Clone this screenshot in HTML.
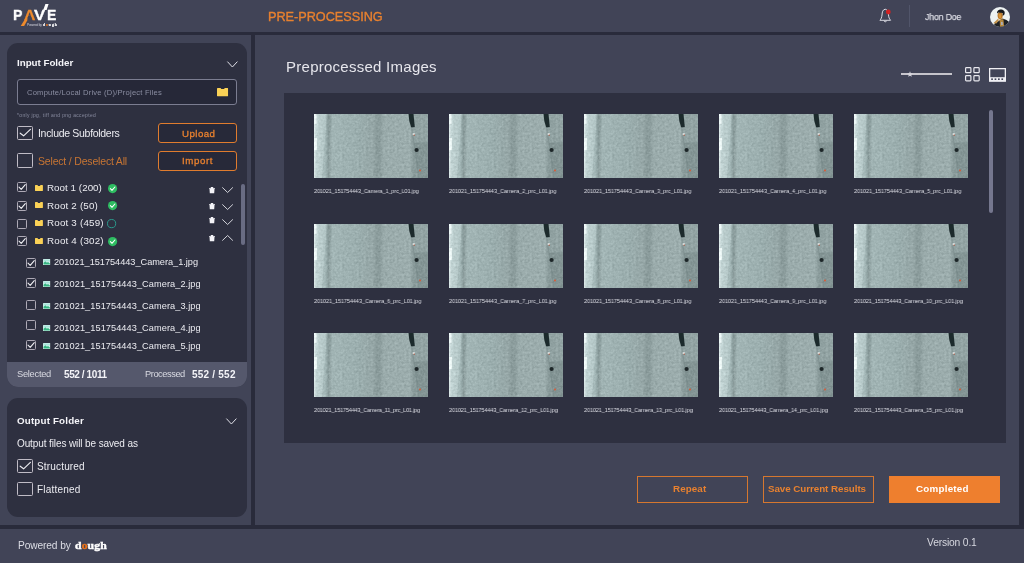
<!DOCTYPE html>
<html lang="en">
<head>
<meta charset="utf-8">
<title>PAVE - Pre-Processing</title>
<style>
*{box-sizing:border-box;margin:0;padding:0}
html,body{width:1024px;height:563px;overflow:hidden;background:#414457;font-family:"Liberation Sans",sans-serif;color:#ececf1}
#app{position:relative;width:1024px;height:563px;overflow:hidden;background:#414457}
.abs{position:absolute}
.dark{position:absolute;background:#292b3b}
.card{position:absolute;background:#2e3040;border-radius:11px;overflow:hidden}
.t{position:absolute;white-space:nowrap;line-height:1;will-change:transform}
.cbL{position:absolute;width:16px;height:14px;border:1px solid #c0bcc6;border-radius:1.5px}
.cbS{position:absolute;width:10px;height:10px;border:1px solid #aeaab6;border-radius:1.5px}
.btn{position:absolute;border:1px solid #e07c2e;border-radius:3px;background:#272939}
.btn2{position:absolute;border:1px solid #d5772f}
svg{position:absolute;overflow:visible}
.th{position:absolute;width:114px;height:64px}
.sb{position:absolute;background:#75778e;border-radius:2px}
</style>
</head>
<body>
<div id="app">
  <!-- hidden defs -->
  <svg width="0" height="0" style="left:0;top:0">
    <defs>
      <linearGradient id="tg" x1="0" x2="1" y1="0" y2="0">
        <stop offset="0" stop-color="#e1eded"/>
        <stop offset="0.02" stop-color="#c1d3d3"/>
        <stop offset="0.105" stop-color="#b1c4c4"/>
        <stop offset="0.125" stop-color="#8a9b9b"/>
        <stop offset="0.16" stop-color="#a2b5b5"/>
        <stop offset="0.38" stop-color="#9baeae"/>
        <stop offset="0.52" stop-color="#96a7a7"/>
        <stop offset="0.55" stop-color="#8a9b9b"/>
        <stop offset="0.585" stop-color="#8c9d9d"/>
        <stop offset="0.61" stop-color="#9aabab"/>
        <stop offset="0.84" stop-color="#9cadad"/>
        <stop offset="0.875" stop-color="#899a9a"/>
        <stop offset="1" stop-color="#8e9f9f"/>
      </linearGradient>
      <filter id="nz" x="0" y="0" width="100%" height="100%" color-interpolation-filters="sRGB">
        <feTurbulence type="fractalNoise" baseFrequency="0.42" numOctaves="2" seed="11" result="n"/>
        <feColorMatrix in="n" type="matrix" values="0.6 0.6 0 0 -0.1  0.6 0.6 0 0 -0.1  0.6 0.6 0 0 -0.1  0 0 0 0 1" result="g"/>
        <feComposite in="SourceGraphic" in2="g" operator="arithmetic" k1="0" k2="1" k3="0.18" k4="-0.09"/>
      </filter>
      <symbol id="thumb" viewBox="0 0 114 64">
        <g filter="url(#nz)">
        <rect width="114" height="64" fill="url(#tg)"/>
        <polygon points="13,0 18,0 13,64 8,64" fill="#7f9391" opacity="0.3"/>
        <polygon points="98,0 114,0 114,28.6 100,29.2" fill="#b6c9c7" opacity="0.15"/>
        <polygon points="100,29.2 114,28.6 114,64 104.8,64" fill="#6f8080" opacity="0.3"/>
        <rect x="0" y="0" width="2.6" height="10" fill="#eef8f7" opacity="0.8"/>
        <rect x="0" y="24" width="3" height="12" fill="#f2fbfa" opacity="0.85"/>
        </g>
        <polygon points="94.5,0 99.5,0 100.8,13 97.2,13.5 95.3,7" fill="#1c2a2c"/>
        <path d="M97.5 13 L100 29 L104.8 64" stroke="#788a8b" stroke-width="0.8" fill="none" opacity="0.7"/>
        <path d="M100 29.2 L114 28.6" stroke="#7c8e8e" stroke-width="0.7" fill="none" opacity="0.8"/>
        <rect x="98.6" y="19.3" width="2.2" height="1.6" fill="#eef3f2"/>
        <rect x="99.6" y="20.6" width="1.3" height="1" fill="#b5523a"/>
        <ellipse cx="102.6" cy="36" rx="2.1" ry="2" fill="#1d2628"/>
        <circle cx="106" cy="56.5" r="0.9" fill="#e2542c"/>
      </symbol>
      <symbol id="chk" viewBox="0 0 10 10">
        <path d="M2 5.2 L4.2 7.4 L8.3 2.6" stroke="#f0f0f4" stroke-width="1.1" fill="none" stroke-linecap="round" stroke-linejoin="round"/>
      </symbol>
      <symbol id="fold" viewBox="0 0 8 6">
        <path d="M0 0.5 Q0 0 0.5 0 L2.5 0 L3.1 0.8 L5 0.8 L5.6 0 L7.5 0 Q8 0 8 0.5 L8 5.5 Q8 6 7.5 6 L0.5 6 Q0 6 0 5.5 Z" fill="#fad156"/>
      </symbol>
      <symbol id="trash" viewBox="0 0 6 6.4">
        <path d="M0 1.2 L6 1.2 L6 2 L5.5 2 L5.2 6.4 L0.8 6.4 L0.5 2 L0 2 Z M1.9 0 L4.1 0 L4.4 1.2 L1.6 1.2 Z" fill="#f4f4f8"/>
      </symbol>
      <symbol id="pic" viewBox="0 0 7.4 6">
        <rect width="7.4" height="6" rx="0.6" fill="#d9f3ec"/>
        <path d="M0.5 5.5 L0.5 3.8 L2.4 2.2 L3.9 3.7 L5 2.9 L6.9 4.4 L6.9 5.5 Z" fill="#35b582"/>
        <rect x="0.5" y="0.5" width="6.4" height="2" fill="#7fd9d0" opacity="0.55"/>
      </symbol>
    </defs>
  </svg>

  <!-- frame lines -->
  <div class="dark" style="left:0;top:32px;width:1024px;height:3px"></div>
  <div class="dark" style="left:0;top:525px;width:1024px;height:4px"></div>
  <div class="dark" style="left:251px;top:32px;width:4px;height:496px"></div>
  <div class="dark" style="left:1019px;top:32px;width:5px;height:496px"></div>

  <!-- HEADER -->
  <svg style="left:0;top:0" width="70" height="32" viewBox="0 0 70 32">
    <polygon points="24.75,19.5 27.75,19.5 24.1,26 20.7,26" fill="#ee8a2c"/>
    <polygon points="43.2,10 46.6,10 48.6,4.1 45.4,4.1" fill="#ffffff"/>
  </svg>
  <svg style="left:879px;top:8px" width="14" height="16" viewBox="0 0 14 16">
    <path d="M6.2 1.2 C3.6 1.6 3.2 4.2 3 7 C2.8 9.6 2 11 0.9 12.3 L11.6 12.3 C10.5 11 9.7 9.6 9.5 7 C9.3 4.2 8.9 1.6 6.2 1.2 Z M5 12.6 C5.2 14.2 7.4 14.2 7.6 12.6" fill="none" stroke="#d9dae2" stroke-width="1"/>
    <circle cx="9.3" cy="4" r="2.4" fill="#d32222"/>
  </svg>
  <div class="abs" style="left:909px;top:5px;width:1px;height:22px;background:#51556a"></div>
  <svg style="left:990px;top:6.5px" width="20" height="20" viewBox="0 0 20 20">
    <defs><clipPath id="avc"><circle cx="10" cy="10" r="10"/></clipPath></defs>
    <g clip-path="url(#avc)">
      <rect width="20" height="20" fill="#edf2f2"/>
      <path d="M3.5 20 L4.6 16.6 L8 14.6 L12.6 11.6 L16.5 13 L19.8 15.4 L20 20 Z" fill="#1e2125"/>
      <path d="M9.6 12.6 L13.4 12.2 L14.2 19.8 L10 19.8 Z" fill="#b5883d"/>
      <ellipse cx="10.2" cy="8.6" rx="2.6" ry="3.7" fill="#b97a2c"/>
      <path d="M8.6 7.4 L10.6 6.8 L11.2 10.8 L9.4 11.4 Z" fill="#d9953a"/>
      <path d="M7.1 6.6 C6.8 3.2 9.4 2.3 11.6 2.6 C14.4 3 15.2 5.4 14.4 7.6 L12.8 9 L12.6 6 L8.4 5.6 Z" fill="#14171a"/>
      <path d="M3.2 16.2 L6.4 13.2 L8.2 11.4 L8.8 13.4 L6.4 16.6 Z" fill="#c2924b"/>
      <path d="M11 15 L12.6 15 L12.8 18 L11.2 18 Z" fill="#aeb3c4"/>
    </g>
  </svg>

  <!-- INPUT CARD -->
  <div class="card" style="left:7px;top:43px;width:240px;height:344px">
    <div class="abs" style="left:0;top:319px;width:240px;height:25px;background:#55586c"></div>
  </div>
  <svg style="left:226.5px;top:60.5px" width="11" height="7" viewBox="0 0 11 7"><path d="M0.4 0.6 L5.4 6 L10.4 0.6" stroke="#e0e0e8" stroke-width="1" fill="none"/></svg>
  <div class="abs" style="left:17px;top:79px;width:220px;height:26px;border:1px solid #7b7d91;border-radius:3px;background:#262838"></div>
  <svg style="left:217px;top:87.6px" width="11.2" height="8.4"><use href="#fold" width="11.2" height="8.4"/></svg>
  <div class="cbL" style="left:17px;top:126px"></div>
  <svg style="left:18px;top:126px" width="14" height="14" viewBox="0 0 14 14"><path d="M2.2 7.2 L5.6 9.8 L12.4 3.4" stroke="#ececf1" stroke-width="1.15" fill="none" stroke-linecap="round" stroke-linejoin="round"/></svg>
  <div class="cbL" style="left:17px;top:153px;height:15px"></div>
  <div class="btn" style="left:158px;top:123px;width:79px;height:20px"></div>
  <div class="btn" style="left:158px;top:150.5px;width:79px;height:20px"></div>
  <div class="cbS" style="left:17px;top:181.9px"></div>
  <svg style="left:17px;top:181.9px" width="10" height="10"><use href="#chk" width="10" height="10"/></svg>
  <svg style="left:35px;top:184.5px" width="7.9" height="6.1"><use href="#fold" width="7.9" height="6.1"/></svg>
  <svg style="left:107.7px;top:184.1px" width="9.2" height="9.2" viewBox="0 0 9.2 9.2"><circle cx="4.6" cy="4.6" r="4.6" fill="#2ebd62"/><path d="M2.4 4.7 L4 6.3 L6.9 3" stroke="#fff" stroke-width="1.1" fill="none" stroke-linecap="round" stroke-linejoin="round"/></svg>
  <svg style="left:209.2px;top:186.9px" width="6" height="6.4"><use href="#trash" width="6" height="6.4"/></svg>
  <svg style="left:221.9px;top:187.4px" width="11.2" height="6" viewBox="0 0 11.2 6"><path d="M0.3 0.4 L5.6 5.5 L10.9 0.4" stroke="#e4e4ea" stroke-width="0.9" fill="none"/></svg>
  <div class="cbS" style="left:17px;top:201px"></div>
  <svg style="left:17px;top:201px" width="10" height="10"><use href="#chk" width="10" height="10"/></svg>
  <svg style="left:35px;top:202.3px" width="7.9" height="6.1"><use href="#fold" width="7.9" height="6.1"/></svg>
  <svg style="left:107.7px;top:201.4px" width="9.2" height="9.2" viewBox="0 0 9.2 9.2"><circle cx="4.6" cy="4.6" r="4.6" fill="#2ebd62"/><path d="M2.4 4.7 L4 6.3 L6.9 3" stroke="#fff" stroke-width="1.1" fill="none" stroke-linecap="round" stroke-linejoin="round"/></svg>
  <svg style="left:209.2px;top:202.9px" width="6" height="6.4"><use href="#trash" width="6" height="6.4"/></svg>
  <svg style="left:221.9px;top:203.9px" width="11.2" height="6" viewBox="0 0 11.2 6"><path d="M0.3 0.4 L5.6 5.5 L10.9 0.4" stroke="#e4e4ea" stroke-width="0.9" fill="none"/></svg>
  <div class="cbS" style="left:17px;top:218.7px"></div>
  <svg style="left:35px;top:220.3px" width="7.9" height="6.1"><use href="#fold" width="7.9" height="6.1"/></svg>
  <svg style="left:107.4px;top:219.4px" width="9.2" height="9.2" viewBox="0 0 9.2 9.2"><circle cx="4.6" cy="4.6" r="4.1" fill="none" stroke="#2a9a8c" stroke-width="1"/></svg>
  <svg style="left:209.2px;top:217.1px" width="6" height="6.4"><use href="#trash" width="6" height="6.4"/></svg>
  <svg style="left:221.9px;top:218.5px" width="11.2" height="6" viewBox="0 0 11.2 6"><path d="M0.3 0.4 L5.6 5.5 L10.9 0.4" stroke="#e4e4ea" stroke-width="0.9" fill="none"/></svg>
  <div class="cbS" style="left:17px;top:236.2px"></div>
  <svg style="left:17px;top:236.2px" width="10" height="10"><use href="#chk" width="10" height="10"/></svg>
  <svg style="left:35px;top:238px" width="7.9" height="6.1"><use href="#fold" width="7.9" height="6.1"/></svg>
  <svg style="left:107.7px;top:236.70000000000002px" width="9.2" height="9.2" viewBox="0 0 9.2 9.2"><circle cx="4.6" cy="4.6" r="4.6" fill="#2ebd62"/><path d="M2.4 4.7 L4 6.3 L6.9 3" stroke="#fff" stroke-width="1.1" fill="none" stroke-linecap="round" stroke-linejoin="round"/></svg>
  <svg style="left:209.2px;top:235.1px" width="6" height="6.4"><use href="#trash" width="6" height="6.4"/></svg>
  <svg style="left:221.9px;top:235.4px" width="11.2" height="6" viewBox="0 0 11.2 6"><path d="M0.3 5.6 L5.6 0.5 L10.9 5.6" stroke="#e4e4ea" stroke-width="0.9" fill="none"/></svg>
  <div class="cbS" style="left:25.5px;top:257.8px"></div>
  <svg style="left:25.5px;top:257.8px" width="10" height="10"><use href="#chk" width="10" height="10"/></svg>
  <svg style="left:42.8px;top:258.8px" width="7.4" height="6"><use href="#pic" width="7.4" height="6"/></svg>
  <div class="cbS" style="left:25.5px;top:278.3px"></div>
  <svg style="left:25.5px;top:278.3px" width="10" height="10"><use href="#chk" width="10" height="10"/></svg>
  <svg style="left:42.8px;top:280.9px" width="7.4" height="6"><use href="#pic" width="7.4" height="6"/></svg>
  <div class="cbS" style="left:25.5px;top:299.8px"></div>
  <svg style="left:42.8px;top:303.1px" width="7.4" height="6"><use href="#pic" width="7.4" height="6"/></svg>
  <div class="cbS" style="left:25.5px;top:320.3px"></div>
  <svg style="left:42.8px;top:325.2px" width="7.4" height="6"><use href="#pic" width="7.4" height="6"/></svg>
  <div class="cbS" style="left:25.5px;top:340.4px"></div>
  <svg style="left:25.5px;top:340.4px" width="10" height="10"><use href="#chk" width="10" height="10"/></svg>
  <svg style="left:42.8px;top:343.4px" width="7.4" height="6"><use href="#pic" width="7.4" height="6"/></svg>
  <div class="sb" style="left:241px;top:184px;width:3.6px;height:61px;background:#696c83"></div>

  <!-- OUTPUT CARD -->
  <div class="card" style="left:7px;top:397.5px;width:240px;height:119px"></div>
  <svg style="left:226.2px;top:418px" width="11" height="7" viewBox="0 0 11 7"><path d="M0.4 0.6 L5.4 6 L10.4 0.6" stroke="#e0e0e8" stroke-width="1" fill="none"/></svg>
  <div class="cbL" style="left:17px;top:459px"></div>
  <svg style="left:18px;top:459px" width="14" height="14" viewBox="0 0 14 14"><path d="M2.2 7.2 L5.6 9.8 L12.4 3.4" stroke="#ececf1" stroke-width="1.15" fill="none" stroke-linecap="round" stroke-linejoin="round"/></svg>
  <div class="cbL" style="left:17px;top:482px"></div>

  <!-- MAIN -->
  <div class="abs" style="left:901px;top:72.8px;width:51.3px;height:2.2px;background:#c6c5cc"></div>
  <svg style="left:906.5px;top:70.7px" width="6" height="6.4" viewBox="0 0 6 6.4"><polygon points="3.00,0.20 3.79,2.21 5.95,2.34 4.28,3.72 4.82,5.81 3.00,4.65 1.18,5.81 1.72,3.72 0.05,2.34 2.21,2.21" fill="#d6d5dc"/></svg>
  <svg style="left:965.3px;top:67.4px" width="14.8" height="14.4" viewBox="0 0 14.8 14.4">
    <g fill="none" stroke="#e8e8ee" stroke-width="1.2">
      <rect x="0.6" y="0.6" width="5.3" height="5.1" rx="0.8"/><rect x="8.9" y="0.6" width="5.3" height="5.1" rx="0.8"/>
      <rect x="0.6" y="8.7" width="5.3" height="5.1" rx="0.8"/><rect x="8.9" y="8.7" width="5.3" height="5.1" rx="0.8"/>
    </g>
  </svg>
  <svg style="left:988.7px;top:68px" width="17" height="13.8" viewBox="0 0 17 13.8">
    <rect x="0.65" y="0.65" width="15.7" height="12.5" fill="none" stroke="#f0f0f4" stroke-width="1.3"/>
    <rect x="0.65" y="9.2" width="15.7" height="4" fill="#f0f0f4"/>
    <g fill="#414457"><rect x="2.2" y="10.4" width="1.7" height="1.6"/><rect x="5.6" y="10.4" width="1.7" height="1.6"/><rect x="9" y="10.4" width="1.7" height="1.6"/><rect x="12.4" y="10.4" width="1.7" height="1.6"/></g>
  </svg>
  <div class="abs" style="left:284px;top:93px;width:722px;height:349.5px;background:#2e3040"></div>
  <svg class="th" style="left:314.4px;top:114px" width="114" height="64"><use href="#thumb" width="114" height="64"/></svg>
  <svg class="th" style="left:449.4px;top:114px" width="114" height="64"><use href="#thumb" width="114" height="64"/></svg>
  <svg class="th" style="left:584.4px;top:114px" width="114" height="64"><use href="#thumb" width="114" height="64"/></svg>
  <svg class="th" style="left:719.4px;top:114px" width="114" height="64"><use href="#thumb" width="114" height="64"/></svg>
  <svg class="th" style="left:854.4px;top:114px" width="114" height="64"><use href="#thumb" width="114" height="64"/></svg>
  <svg class="th" style="left:314.4px;top:224px" width="114" height="64"><use href="#thumb" width="114" height="64"/></svg>
  <svg class="th" style="left:449.4px;top:224px" width="114" height="64"><use href="#thumb" width="114" height="64"/></svg>
  <svg class="th" style="left:584.4px;top:224px" width="114" height="64"><use href="#thumb" width="114" height="64"/></svg>
  <svg class="th" style="left:719.4px;top:224px" width="114" height="64"><use href="#thumb" width="114" height="64"/></svg>
  <svg class="th" style="left:854.4px;top:224px" width="114" height="64"><use href="#thumb" width="114" height="64"/></svg>
  <svg class="th" style="left:314.4px;top:333px" width="114" height="64"><use href="#thumb" width="114" height="64"/></svg>
  <svg class="th" style="left:449.4px;top:333px" width="114" height="64"><use href="#thumb" width="114" height="64"/></svg>
  <svg class="th" style="left:584.4px;top:333px" width="114" height="64"><use href="#thumb" width="114" height="64"/></svg>
  <svg class="th" style="left:719.4px;top:333px" width="114" height="64"><use href="#thumb" width="114" height="64"/></svg>
  <svg class="th" style="left:854.4px;top:333px" width="114" height="64"><use href="#thumb" width="114" height="64"/></svg>
  <div class="sb" style="left:989px;top:110px;width:4px;height:103px"></div>
  <div class="btn2" style="left:637px;top:476px;width:111px;height:27px"></div>
  <div class="btn2" style="left:763px;top:476px;width:111px;height:27px"></div>
  <div class="abs" style="left:888.5px;top:476px;width:111px;height:27px;background:#ee7f2e"></div>

<div class="t" style="left:268.00px;top:10.55px;font-size:12.7px;letter-spacing:-0.019px;color:#e8812f;-webkit-text-stroke:0.35px #e8812f">PRE-PROCESSING</div>
<div class="t" style="left:925.00px;top:11.85px;font-size:9.9px;letter-spacing:-0.205px;color:#dcdde5;transform:scaleX(0.890);transform-origin:0 0;-webkit-text-stroke:0.25px #dcdde5">Jhon Doe</div>
<div class="t" style="left:17.00px;top:57.90px;font-size:9.8px;letter-spacing:-0.035px;color:#f4f4f8;font-weight:bold">Input Folder</div>
<div class="t" style="left:27.00px;top:88.70px;font-size:7.6px;letter-spacing:0.204px;color:#8b8ea2">Compute/Local Drive (D)/Project Files</div>
<div class="t" style="left:17.00px;top:114.05px;font-size:4.9px;letter-spacing:0.385px;color:#8b8ea2">*only jpg, tiff and png accepted</div>
<div class="t" style="left:37.60px;top:127.75px;font-size:10.5px;letter-spacing:-0.301px;color:#ececf1">Include Subfolders</div>
<div class="t" style="left:181.60px;top:128.75px;font-size:9.7px;letter-spacing:0.458px;color:#e8812f;-webkit-text-stroke:0.3px #e8812f">Upload</div>
<div class="t" style="left:37.60px;top:155.85px;font-size:10.5px;letter-spacing:-0.182px;color:#c87533">Select / Deselect All</div>
<div class="t" style="left:182.10px;top:155.85px;font-size:9.7px;letter-spacing:0.607px;color:#e8812f;-webkit-text-stroke:0.3px #e8812f">Import</div>
<div class="t" style="left:46.80px;top:182.70px;font-size:9.8px;letter-spacing:0.037px;color:#ececf1">Root 1 (200)</div>
<div class="t" style="left:46.80px;top:200.50px;font-size:9.8px;letter-spacing:0.185px;color:#ececf1">Root 2 (50)</div>
<div class="t" style="left:46.80px;top:218.20px;font-size:9.8px;letter-spacing:0.191px;color:#ececf1">Root 3 (459)</div>
<div class="t" style="left:46.80px;top:235.90px;font-size:9.8px;letter-spacing:0.191px;color:#ececf1">Root 4 (302)</div>
<div class="t" style="left:53.50px;top:257.60px;font-size:9.2px;letter-spacing:-0.020px;color:#ececf1">201021_151754443_Camera_1.jpg</div>
<div class="t" style="left:53.50px;top:279.50px;font-size:9.2px;letter-spacing:0.073px;color:#ececf1">201021_151754443_Camera_2.jpg</div>
<div class="t" style="left:53.50px;top:301.60px;font-size:9.2px;letter-spacing:0.073px;color:#ececf1">201021_151754443_Camera_3.jpg</div>
<div class="t" style="left:53.50px;top:323.70px;font-size:9.2px;letter-spacing:0.073px;color:#ececf1">201021_151754443_Camera_4.jpg</div>
<div class="t" style="left:53.50px;top:342.00px;font-size:9.2px;letter-spacing:0.073px;color:#ececf1">201021_151754443_Camera_5.jpg</div>
<div class="t" style="left:16.90px;top:370.35px;font-size:9.3px;letter-spacing:-0.273px;color:#d9dae2">Selected</div>
<div class="t" style="left:63.50px;top:369.80px;font-size:10px;letter-spacing:-0.406px;color:#f4f4f8;font-weight:bold">552 / 1011</div>
<div class="t" style="left:144.80px;top:370.35px;font-size:9.3px;letter-spacing:-0.457px;color:#d9dae2">Processed</div>
<div class="t" style="left:191.60px;top:369.80px;font-size:10px;letter-spacing:0.220px;color:#f4f4f8;font-weight:bold">552 / 552</div>
<div class="t" style="left:16.90px;top:416.20px;font-size:9.8px;letter-spacing:0.163px;color:#f4f4f8;font-weight:bold">Output Folder</div>
<div class="t" style="left:16.90px;top:438.90px;font-size:10px;letter-spacing:-0.109px;color:#ececf1">Output files will be saved as</div>
<div class="t" style="left:37.40px;top:461.90px;font-size:10px;letter-spacing:0.170px;color:#ececf1">Structured</div>
<div class="t" style="left:37.40px;top:485.00px;font-size:10px;letter-spacing:0.208px;color:#ececf1">Flattened</div>
<div class="t" style="left:17.70px;top:540.80px;font-size:10.2px;letter-spacing:-0.112px;color:#dcdde5">Powered by</div>
<div class="t" style="left:75.00px;top:541.10px;font-size:9.6px;letter-spacing:0.094px;color:#ffffff;font-weight:bold;font-family:&quot;Liberation Serif&quot;, serif;transform:scaleX(1.220);transform-origin:0 0;-webkit-text-stroke:0.4px #fff">d<span style="color:#e8731c;-webkit-text-stroke-color:#e8731c">o</span>ugh</div>
<div class="t" style="left:12.99px;top:7.25px;font-size:15.5px;letter-spacing:0.000px;color:#ffffff;font-weight:bold;transform:scaleX(0.911);transform-origin:0 0;-webkit-text-stroke:0.35px #fff">P</div>
<div class="t" style="left:23.80px;top:7.25px;font-size:15.5px;letter-spacing:0.000px;color:#ee8a2c;font-weight:bold;transform:scaleX(1.018);transform-origin:0 0;-webkit-text-stroke:0.3px #ee8a2c">A</div>
<div class="t" style="left:34.40px;top:7.25px;font-size:15.5px;letter-spacing:0.000px;color:#ffffff;font-weight:bold;transform:scaleX(1.073);transform-origin:0 0;-webkit-text-stroke:0.3px #fff">V</div>
<div class="t" style="left:47.30px;top:7.25px;font-size:15.5px;letter-spacing:0.000px;color:#ffffff;font-weight:bold;transform:scaleX(0.900);transform-origin:0 0;-webkit-text-stroke:0.35px #fff">E</div>
<div class="t" style="left:27.40px;top:23.51px;font-size:3.3px;letter-spacing:-0.285px;color:#c9cad3">Powered by</div>
<div class="t" style="left:43.20px;top:23.50px;font-size:3.6px;letter-spacing:1.027px;color:#ffffff;font-weight:bold;font-family:&quot;Liberation Serif&quot;, serif;-webkit-text-stroke:0.2px #fff">d<span style="color:#e8731c;-webkit-text-stroke-color:#e8731c">o</span>ugh</div>
<div class="t" style="left:926.70px;top:537.75px;font-size:10.3px;letter-spacing:-0.169px;color:#d6d7df">Version 0.1</div>
<div class="t" style="left:285.80px;top:59.00px;font-size:15px;letter-spacing:0.261px;color:#e6e6ec">Preprocessed Images</div>
<div class="t" style="left:672.90px;top:484.20px;font-size:9.8px;letter-spacing:0.099px;color:#e8812f;font-weight:bold">Repeat</div>
<div class="t" style="left:767.70px;top:484.20px;font-size:9.8px;letter-spacing:-0.055px;color:#e8812f;font-weight:bold">Save Current Results</div>
<div class="t" style="left:916.00px;top:483.50px;font-size:9.8px;letter-spacing:0.233px;color:#ffffff;font-weight:bold">Completed</div>
<div class="t" style="left:314.40px;top:188.20px;font-size:6.0px;letter-spacing:-0.153px;color:#dcdde4;transform:scaleX(0.920);transform-origin:0 0">201021_151754443_Camera_1_prc_L01.jpg</div>
<div class="t" style="left:449.40px;top:188.20px;font-size:6.0px;letter-spacing:-0.078px;color:#dcdde4;transform:scaleX(0.920);transform-origin:0 0">201021_151754443_Camera_2_prc_L01.jpg</div>
<div class="t" style="left:584.40px;top:188.20px;font-size:6.0px;letter-spacing:-0.078px;color:#dcdde4;transform:scaleX(0.920);transform-origin:0 0">201021_151754443_Camera_3_prc_L01.jpg</div>
<div class="t" style="left:719.40px;top:188.20px;font-size:6.0px;letter-spacing:-0.078px;color:#dcdde4;transform:scaleX(0.920);transform-origin:0 0">201021_151754443_Camera_4_prc_L01.jpg</div>
<div class="t" style="left:854.40px;top:188.20px;font-size:6.0px;letter-spacing:-0.078px;color:#dcdde4;transform:scaleX(0.920);transform-origin:0 0">201021_151754443_Camera_5_prc_L01.jpg</div>
<div class="t" style="left:314.40px;top:298.20px;font-size:6.0px;letter-spacing:-0.078px;color:#dcdde4;transform:scaleX(0.920);transform-origin:0 0">201021_151754443_Camera_6_prc_L01.jpg</div>
<div class="t" style="left:449.40px;top:298.20px;font-size:6.0px;letter-spacing:-0.078px;color:#dcdde4;transform:scaleX(0.920);transform-origin:0 0">201021_151754443_Camera_7_prc_L01.jpg</div>
<div class="t" style="left:584.40px;top:298.20px;font-size:6.0px;letter-spacing:-0.078px;color:#dcdde4;transform:scaleX(0.920);transform-origin:0 0">201021_151754443_Camera_8_prc_L01.jpg</div>
<div class="t" style="left:719.40px;top:298.20px;font-size:6.0px;letter-spacing:-0.078px;color:#dcdde4;transform:scaleX(0.920);transform-origin:0 0">201021_151754443_Camera_9_prc_L01.jpg</div>
<div class="t" style="left:854.40px;top:298.20px;font-size:6.0px;letter-spacing:-0.127px;color:#dcdde4;transform:scaleX(0.920);transform-origin:0 0">201021_151754443_Camera_10_prc_L01.jpg</div>
<div class="t" style="left:314.40px;top:407.30px;font-size:6.0px;letter-spacing:-0.189px;color:#dcdde4;transform:scaleX(0.920);transform-origin:0 0">201021_151754443_Camera_11_prc_L01.jpg</div>
<div class="t" style="left:449.40px;top:407.30px;font-size:6.0px;letter-spacing:-0.127px;color:#dcdde4;transform:scaleX(0.920);transform-origin:0 0">201021_151754443_Camera_12_prc_L01.jpg</div>
<div class="t" style="left:584.40px;top:407.30px;font-size:6.0px;letter-spacing:-0.127px;color:#dcdde4;transform:scaleX(0.920);transform-origin:0 0">201021_151754443_Camera_13_prc_L01.jpg</div>
<div class="t" style="left:719.40px;top:407.30px;font-size:6.0px;letter-spacing:-0.127px;color:#dcdde4;transform:scaleX(0.920);transform-origin:0 0">201021_151754443_Camera_14_prc_L01.jpg</div>
<div class="t" style="left:854.40px;top:407.30px;font-size:6.0px;letter-spacing:-0.127px;color:#dcdde4;transform:scaleX(0.920);transform-origin:0 0">201021_151754443_Camera_15_prc_L01.jpg</div>
  <svg style="left:0;top:0" width="70" height="32" viewBox="0 0 70 32"><polygon points="28.3,15.8 30.9,15.8 31.85,18.2 27.35,18.2" fill="#414457"/></svg>
</div>
</body>
</html>
